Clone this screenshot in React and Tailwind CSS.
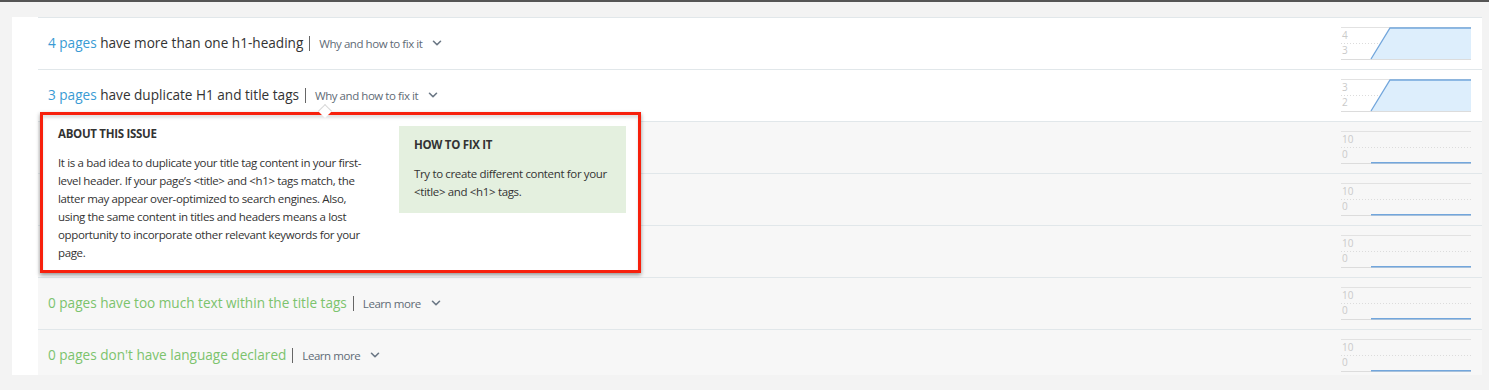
import { ChevronDown } from 'lucide-react'

const rows = [
  { count: '4 pages', text: 'have more than one h1-heading', link: 'Why and how to fix it', ok: false, hi: '4', lo: '3' },
  { count: '3 pages', text: 'have duplicate H1 and title tags', link: 'Why and how to fix it', ok: false, hi: '3', lo: '2' },
  { count: '0 pages', text: 'have too much text within the title tags', link: 'Learn more', ok: true },
  { count: '0 pages', text: 'have too much text within the title tags', link: 'Learn more', ok: true },
  { count: '0 pages', text: 'have too much text within the title tags', link: 'Learn more', ok: true },
  { count: '0 pages', text: 'have too much text within the title tags', link: 'Learn more', ok: true },
  { count: '0 pages', text: "don't have language declared", link: 'Learn more', ok: true },
]

const about = [
  'It is a bad idea to duplicate your title tag content in your first-',
  'level header. If your page’s <title> and <h1> tags match, the',
  'latter may appear over-optimized to search engines. Also,',
  'using the same content in titles and headers means a lost',
  'opportunity to incorporate other relevant keywords for your',
  'page.',
]

const fix = ['Try to create different content for your', '<title> and <h1> tags.']

function Chart({ hi, lo, flat }) {
  return (
    <svg width="131" height="33" viewBox="0 0 131 33" className="block">
      <line x1="0" y1="0.5" x2="130" y2="0.5" stroke="#e2e2e2" />
      <line x1="0" y1="16.5" x2="130" y2="16.5" stroke="#dcdcdc" strokeDasharray="1 2" />
      <line x1="0" y1="32.5" x2="130" y2="32.5" stroke="#dcdcdc" />
      <text x="1" y="12" fontSize="10" fill="#cacaca" fontFamily="Open Sans, sans-serif">{hi}</text>
      <text x="1" y="27" fontSize="10" fill="#cacaca" fontFamily="Open Sans, sans-serif">{lo}</text>
      {flat ? (
        <line x1="30" y1="31.8" x2="130" y2="31.8" stroke="#72a6dc" strokeWidth="1.5" />
      ) : (
        <>
          <path d="M30 32 L49 1 L130 1 L130 32 Z" fill="#ddeefc" />
          <polyline points="30,32 49,1 130,1" fill="none" stroke="#72a6dc" strokeWidth="1.3" />
        </>
      )}
    </svg>
  )
}

function Row({ row, gray }) {
  return (
    <div className={`h-[52px] flex items-center justify-between pl-[10px] pr-[10px] border-t border-[#e1e7ea] ${gray ? 'bg-[#f7f7f7]' : 'bg-white'}`}>
      <div className="flex items-center text-[13.6px]">
        {row.ok ? (
          <span className="text-[#7cc36d]">{row.count} {row.text}</span>
        ) : (
          <span className="text-[#333]">
            <span className="text-[#3a9bd4]">{row.count}</span> {row.text}
          </span>
        )}
        <span className="ml-[6px] mr-[9px] h-[15px] w-px bg-[#666]" />
        <span className="text-[11.5px] text-[#5f6b76] tracking-[-0.45px]">{row.link}</span>
        <ChevronDown size={14} strokeWidth={2.75} className="ml-[8px] text-[#6b7785]" />
      </div>
      <Chart hi={row.ok ? '10' : row.hi} lo={row.ok ? '0' : row.lo} flat={row.ok} />
    </div>
  )
}

export default function App() {
  return (
    <div className="min-h-screen bg-[#f3f3f3] font-['Open_Sans',sans-serif]">
      <div className="h-[2px] bg-[#555]" />
      <div className="pt-[15px] pl-[12px] pr-[7px]">
        <div className="relative h-[358px] overflow-hidden bg-white pl-[26px]">
          {rows.map((row, i) => (
            <Row key={i} row={row} gray={i >= 2} />
          ))}

          <div className="absolute left-[28px] top-[95px] w-[601px] h-[161px] border-[3px] border-[#f7200c] bg-white shadow-[0_2px_4px_rgba(0,0,0,0.4)]">
            <div className="absolute left-[277px] top-[-9px] w-[10px] h-[10px] rotate-45 bg-white border-l border-t border-[#d8d8d8]" />
            <div className="flex h-full shadow-[inset_0_3px_3px_rgba(0,0,0,0.12)] text-[#333] text-[11.5px] leading-[18px]">
              <div className="w-[326px] pl-[15px] pt-[10px]">
                <div className="font-bold tracking-[-0.3px]">ABOUT THIS ISSUE</div>
                <div className="mt-[11px] tracking-[-0.35px] whitespace-nowrap">
                  {about.map(line => (
                    <div key={line}>{line}</div>
                  ))}
                </div>
              </div>
              <div className="ml-[30px] mt-[11px] w-[227px] h-[87px] bg-[#e4f0df] pl-[15px] pt-[10px]">
                <div className="font-bold tracking-[-0.3px]">HOW TO FIX IT</div>
                <div className="mt-[11px] tracking-[-0.35px] whitespace-nowrap">
                  {fix.map(line => (
                    <div key={line}>{line}</div>
                  ))}
                </div>
              </div>
            </div>
          </div>
        </div>
      </div>
    </div>
  )
}
